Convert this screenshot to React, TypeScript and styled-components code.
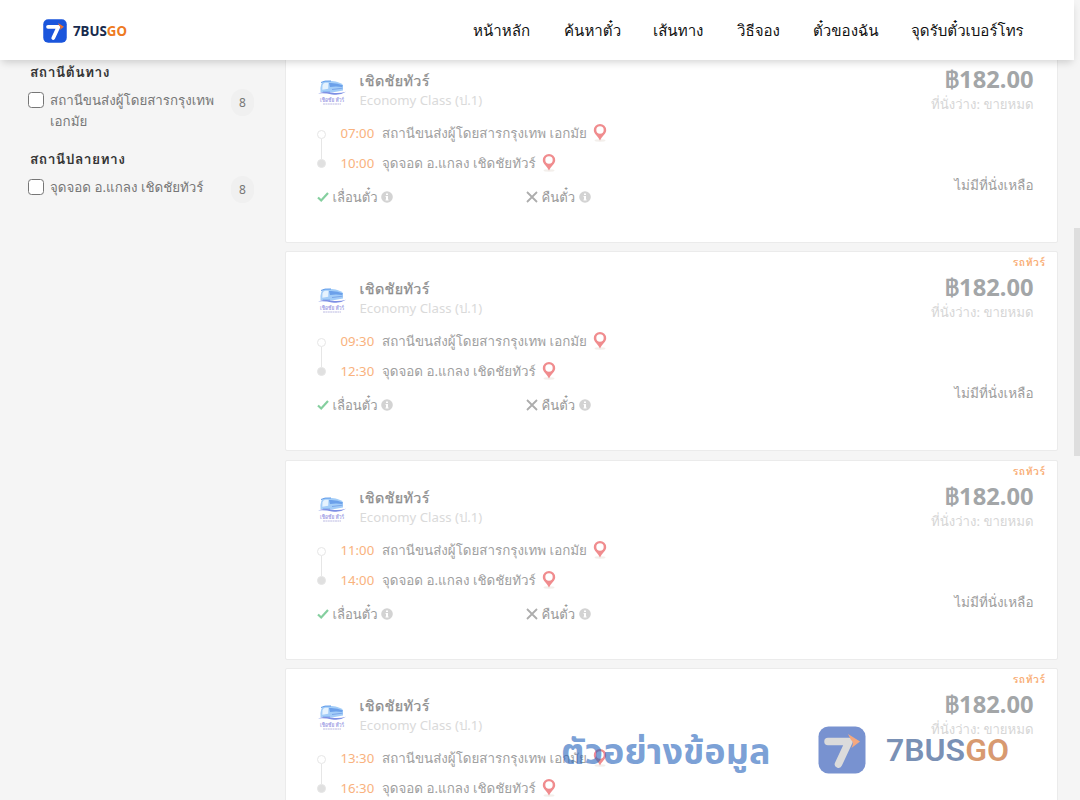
import React from 'react';
import styled, { createGlobalStyle } from 'styled-components';

const GlobalStyle = createGlobalStyle`
  * { box-sizing: border-box; }
  body {
    margin: 0;
    overflow: hidden;
    background: #f5f5f5;
    font-family: 'Noto Sans', Loma, sans-serif;
  }
`;

const Page = styled.div`
  width: 1080px;
  height: 800px;
  overflow: hidden;
  position: relative;
`;

const Header = styled.header`
  position: absolute;
  z-index: 3;
  top: 0;
  left: 0;
  width: 1074px;
  height: 60px;
  padding: 1px 51px 0 43px;
  display: flex;
  align-items: center;
  justify-content: space-between;
  background: #fff;
  box-shadow: 0 4px 8px -2px rgba(0, 0, 0, 0.18);
`;

const Brand = styled.div`
  display: flex;
  align-items: center;
  gap: 6px;
  height: 24px;
`;

const BrandName = styled.span`
  color: #172b4d;
  font: 700 13.3px/24px 'Noto Sans', sans-serif;
`;

const Orange = styled.span`
  color: #ee7a22;
`;

const Nav = styled.nav`
  display: flex;
  gap: 33px;
  padding-bottom: 2px;
`;

const NavItem = styled.a<{ $w: number }>`
  width: ${(p) => p.$w}px;
  white-space: nowrap;
  color: #111;
  font-size: 15.1px;
  line-height: 24px;
`;

const Body = styled.div`
  display: flex;
  padding-top: 42.5px;
`;

const Sidebar = styled.aside`
  width: 285px;
  flex: none;
  padding: 19.5px 31px 0 28px;
`;

const FilterGroup = styled.section<{ $h: number }>`
  height: ${(p) => p.$h}px;
`;

const FilterTitle = styled.h3`
  margin: 0 0 8px;
  padding-left: 2px;
  color: #333;
  font-size: 13.8px;
  letter-spacing: 0.45px;
  font-weight: 700;
  line-height: 20px;
  white-space: nowrap;
`;

const FilterRow = styled.div`
  display: flex;
  align-items: flex-start;
`;

const Check = styled.span`
  width: 16px;
  height: 16px;
  margin-top: 1.5px;
  flex: none;
  border: 1.5px solid #767676;
  border-radius: 3.5px;
  background: #fff;
`;

const FilterLabel = styled.span`
  width: 181px;
  padding-left: 6px;
  color: #777;
  font-size: 13.35px;
  line-height: 21px;
  white-space: nowrap;
`;

const Count = styled.span`
  width: 23px;
  height: 27px;
  margin: -1px 0 0 6px;
  border-radius: 12px;
  background: #f0f0f0;
  color: #777;
  font-size: 12px;
  line-height: 27px;
  text-align: center;
`;

const Results = styled.main`
  width: 773px;
  display: flex;
  flex-direction: column;
  gap: 8.65px;
`;

const Card = styled.article`
  height: 200px;
  flex: none;
  display: flex;
  justify-content: space-between;
  padding: 0 12px 0 32px;
  border: 1px solid #ebebeb;
  border-radius: 2px;
  background: #fff;
`;

const Trip = styled.div`
  width: 420px;
  padding-top: 26px;
`;

const Operator = styled.div`
  display: flex;
  height: 48px;
`;

const OperatorText = styled.div`
  padding-left: 13.5px;
`;

const OperatorName = styled.div`
  color: #8c8c8c;
  font-size: 14.3px;
  letter-spacing: 0.4px;
  font-weight: 500;
  line-height: 21px;
  white-space: nowrap;
  -webkit-text-stroke: 0.25px #8c8c8c;
`;

const ClassName = styled.div`
  color: #dadada;
  font-size: 13.2px;
  line-height: 18px;
`;

const Route = styled.div`
  display: flex;
`;

const Track = styled.div`
  width: 9px;
  height: 38px;
  margin: 12px 14.5px 0 -1px;
  display: flex;
  flex-direction: column;
  align-items: center;
`;

const Dot = styled.span<{ $filled?: boolean }>`
  width: 9px;
  height: 9px;
  flex: none;
  border: 1px solid #e6e6e6;
  border-radius: 50%;
  background: ${(p) => (p.$filled ? '#e0e0e0' : '#fff')};
`;

const Line = styled.span`
  width: 1px;
  flex: 1;
  background: #e6e6e6;
`;

const Stop = styled.div`
  display: flex;
  align-items: center;
  height: 30px;
`;

const Time = styled.span`
  width: 41.5px;
  color: #f9b27e;
  font-size: 13.2px;
  line-height: 30px;
`;

const Place = styled.span`
  margin-right: 6.5px;
  color: #a0a0a0;
  font-size: 13.36px;
  line-height: 30px;
  white-space: nowrap;
`;

const Policies = styled.div`
  display: flex;
  height: 24px;
  margin-top: 7px;
`;

const Policy = styled.div`
  width: 209px;
  margin-left: -1px;
  margin-right: 1px;
  display: flex;
  align-items: center;
  gap: 3.5px;
  color: #9a9a9a;
  font-size: 13.1px;
  line-height: 24px;
  white-space: nowrap;
`;

const Fare = styled.div`
  display: flex;
  flex-direction: column;
  align-items: flex-end;
  white-space: nowrap;
`;

const Tag = styled.div`
  height: 20px;
  color: #f9ae76;
  font-size: 10.3px;
  letter-spacing: 0.6px;
  margin-right: -0.6px;
  font-weight: 700;
  line-height: 20px;
`;

const Price = styled.div`
  height: 30px;
  margin-right: 11.5px;
  color: #a3a6a8;
  font-size: 23.7px;
  font-weight: 700;
  line-height: 30px;
`;

const Seats = styled.div`
  height: 20px;
  margin-right: 11.5px;
  color: #d6d6d6;
  font-size: 13.2px;
  line-height: 20px;
`;

const SoldOut = styled.div`
  margin: 61px 11.5px 0 0;
  color: #9c9c9c;
  font-size: 13.5px;
  line-height: 20px;
`;

const Scrollbar = styled.div`
  position: absolute;
  z-index: 2;
  top: 228px;
  right: 0;
  width: 6px;
  height: 228px;
  background: #dedede;
`;

const Watermark = styled.div`
  position: absolute;
  z-index: 4;
  left: 561px;
  top: 724px;
  display: flex;
  align-items: center;
  height: 52px;
  white-space: nowrap;
`;

const SampleText = styled.span`
  width: 257px;
  padding-top: 5px;
  color: rgba(36, 97, 187, 0.6);
  font: 700 36px/52px 'Noto Sans Thai', 'Noto Sans', sans-serif;
`;

const MarkName = styled.span`
  margin-left: 20px;
  color: rgba(31, 71, 132, 0.6);
  font: 600 32px/52px Roboto, sans-serif;
`;

const MarkOrange = styled.span`
  color: rgba(190, 85, 15, 0.6);
`;

const FadedLogo = styled.div`
  height: 48px;
  opacity: 0.6;
`;

interface LogoProps {
  size: number;
  fill?: string;
  stroke?: string;
}

function Logo({ size, fill = '#1a55dc', stroke = '#fff' }: LogoProps) {
  return (
    <svg width={size} height={size} viewBox="0 0 48 48">
      <rect x="0.5" y="0.5" width="47" height="47" rx="10" fill={fill} />
      <path d="M10 15.500h21L20.500 38" fill="none" stroke={stroke} strokeWidth="7.500" strokeLinecap="round" strokeLinejoin="round" />
      <path d="M30 8l12 7.500-8.500 6.500q3-6-.5-8z" fill="#f0702a" />
    </svg>
  );
}

function BusLogo() {
  return (
    <svg width="28" height="28" viewBox="0 0 28 28" overflow="visible">
      <path d="M2.500 14q-.5-4 .8-8Q4.500 3 8 3h6q8 .8 11 4v5.500l-11 2z" fill="#a3cdf8" />
      <path d="M4.500 7.500q.5-2.500 3-2.700l3-.1-.3 6-5.900 1z" fill="#e6f3fe" />
      <path d="M11 5q8-.5 14 2.500l-1 1.500q-6-1-12 0z" fill="#6ba0ea" />
      <path d="M3 4.500q3-2 10-1.500" stroke="#5d9aea" fill="none" />
      <path d="M14 11.500l10.500-1.300M5 14h7" stroke="#7aa6ea" fill="none" />
      <path d="M0 15.500q7-2.500 14-.8 7 1 14-.9-6 4-14 2.600-7-1.500-14-.9z" fill="#7d8fe4" />
      <text x="14" y="23.500" textAnchor="middle" fontSize="6" fontWeight="700" fill="#9c9ce4" textLength="24" lengthAdjust="spacingAndGlyphs">เชิดชัย ทัวร์</text>
      <path d="M5 26h18" stroke="#bcbbe2" strokeWidth="1" strokeDasharray="2 .4" />
    </svg>
  );
}

function Pin() {
  return (
    <svg width="14" height="18" viewBox="0 0 14 18">
      <ellipse cx="7" cy="16.500" rx="5.500" ry="1.200" fill="#f3efeb" />
      <path fillRule="evenodd" d="M7 0a6.200 6.200 0 0 0-6.200 6.200c0 3.600 4.200 6 6.200 10.200 2-4.200 6.200-6.600 6.200-10.200A6.200 6.200 0 0 0 7 0zm0 2.300a3.700 3.700 0 1 1 0 7.400 3.700 3.700 0 0 1 0-7.400z" fill="#f08c8e" />
    </svg>
  );
}

function InfoIcon() {
  return (
    <svg width="12" height="12" viewBox="0 0 12 12">
      <circle cx="6" cy="6" r="5.800" fill="#d3d3d3" />
      <path d="M5 2.500h2v1.600H5zM4.600 5H7v3.500h.6v1H4.500v-1H5V6h-.4z" fill="#fff" />
    </svg>
  );
}

function CheckIcon() {
  return (
    <svg width="12" height="12" viewBox="0 0 12 12">
      <path d="M1 6.500l3.200 3L11 2" fill="none" stroke="#85cf9f" strokeWidth="2.200" />
    </svg>
  );
}

function CrossIcon() {
  return (
    <svg width="12" height="12" viewBox="0 0 12 12">
      <path d="M1 1l10 10M11 1L1 11" fill="none" stroke="#adadad" strokeWidth="1.800" />
    </svg>
  );
}

const LogoSlot = styled.div`
  padding-top: 8px;
`;

const navItems: [string, number][] = [
  ['หน้าหลัก', 58],
  ['ค้นหาตั๋ว', 56],
  ['เส้นทาง', 51],
  ['วิธีจอง', 43],
  ['ตั๋วของฉัน', 65],
  ['จุดรับตั๋วเบอร์โทร', 112],
];

const trips = [
  ['07:00', '10:00'],
  ['09:30', '12:30'],
  ['11:00', '14:00'],
  ['13:30', '16:30'],
];

function TripCard({ depart, arrive }: { depart: string; arrive: string }) {
  return (
    <Card>
      <Trip>
        <Operator>
          <LogoSlot><BusLogo /></LogoSlot>
          <OperatorText>
            <OperatorName>เชิดชัยทัวร์</OperatorName>
            <ClassName>Economy Class (ป.1)</ClassName>
          </OperatorText>
        </Operator>
        <Route>
          <Track><Dot /><Line /><Dot $filled /></Track>
          <div>
            <Stop><Time>{depart}</Time><Place>สถานีขนส่งผู้โดยสารกรุงเทพ เอกมัย</Place><Pin /></Stop>
            <Stop><Time>{arrive}</Time><Place>จุดจอด อ.แกลง เชิดชัยทัวร์</Place><Pin /></Stop>
          </div>
        </Route>
        <Policies>
          <Policy><CheckIcon />เลื่อนตั๋ว<InfoIcon /></Policy>
          <Policy><CrossIcon />คืนตั๋ว<InfoIcon /></Policy>
        </Policies>
      </Trip>
      <Fare>
        <Tag>รถทัวร์</Tag>
        <Price>฿182.00</Price>
        <Seats>ที่นั่งว่าง: ขายหมด</Seats>
        <SoldOut>ไม่มีที่นั่งเหลือ</SoldOut>
      </Fare>
    </Card>
  );
}

export default function App() {
  return (
    <Page>
      <GlobalStyle />
      <Header>
        <Brand>
          <Logo size={24} />
          <BrandName>7BUS<Orange>GO</Orange></BrandName>
        </Brand>
        <Nav>{navItems.map(([t, w]) => <NavItem key={t} $w={w}>{t}</NavItem>)}</Nav>
      </Header>
      <Body>
        <Sidebar>
          <FilterGroup $h={87}>
            <FilterTitle>สถานีต้นทาง</FilterTitle>
            <FilterRow>
              <Check />
              <FilterLabel>สถานีขนส่งผู้โดยสารกรุงเทพ<br />เอกมัย</FilterLabel>
              <Count>8</Count>
            </FilterRow>
          </FilterGroup>
          <FilterGroup $h={60}>
            <FilterTitle>สถานีปลายทาง</FilterTitle>
            <FilterRow>
              <Check />
              <FilterLabel>จุดจอด อ.แกลง เชิดชัยทัวร์</FilterLabel>
              <Count>8</Count>
            </FilterRow>
          </FilterGroup>
        </Sidebar>
        <Results>
          {trips.map(([d, a]) => <TripCard key={d} depart={d} arrive={a} />)}
        </Results>
      </Body>
      <Scrollbar />
      <Watermark>
        <SampleText>ตัวอย่างข้อมูล</SampleText>
        <FadedLogo><Logo size={48} fill="#1f4bb2" stroke="#c4c4c4" /></FadedLogo>
        <MarkName>7BUS<MarkOrange>GO</MarkOrange></MarkName>
      </Watermark>
    </Page>
  );
}
